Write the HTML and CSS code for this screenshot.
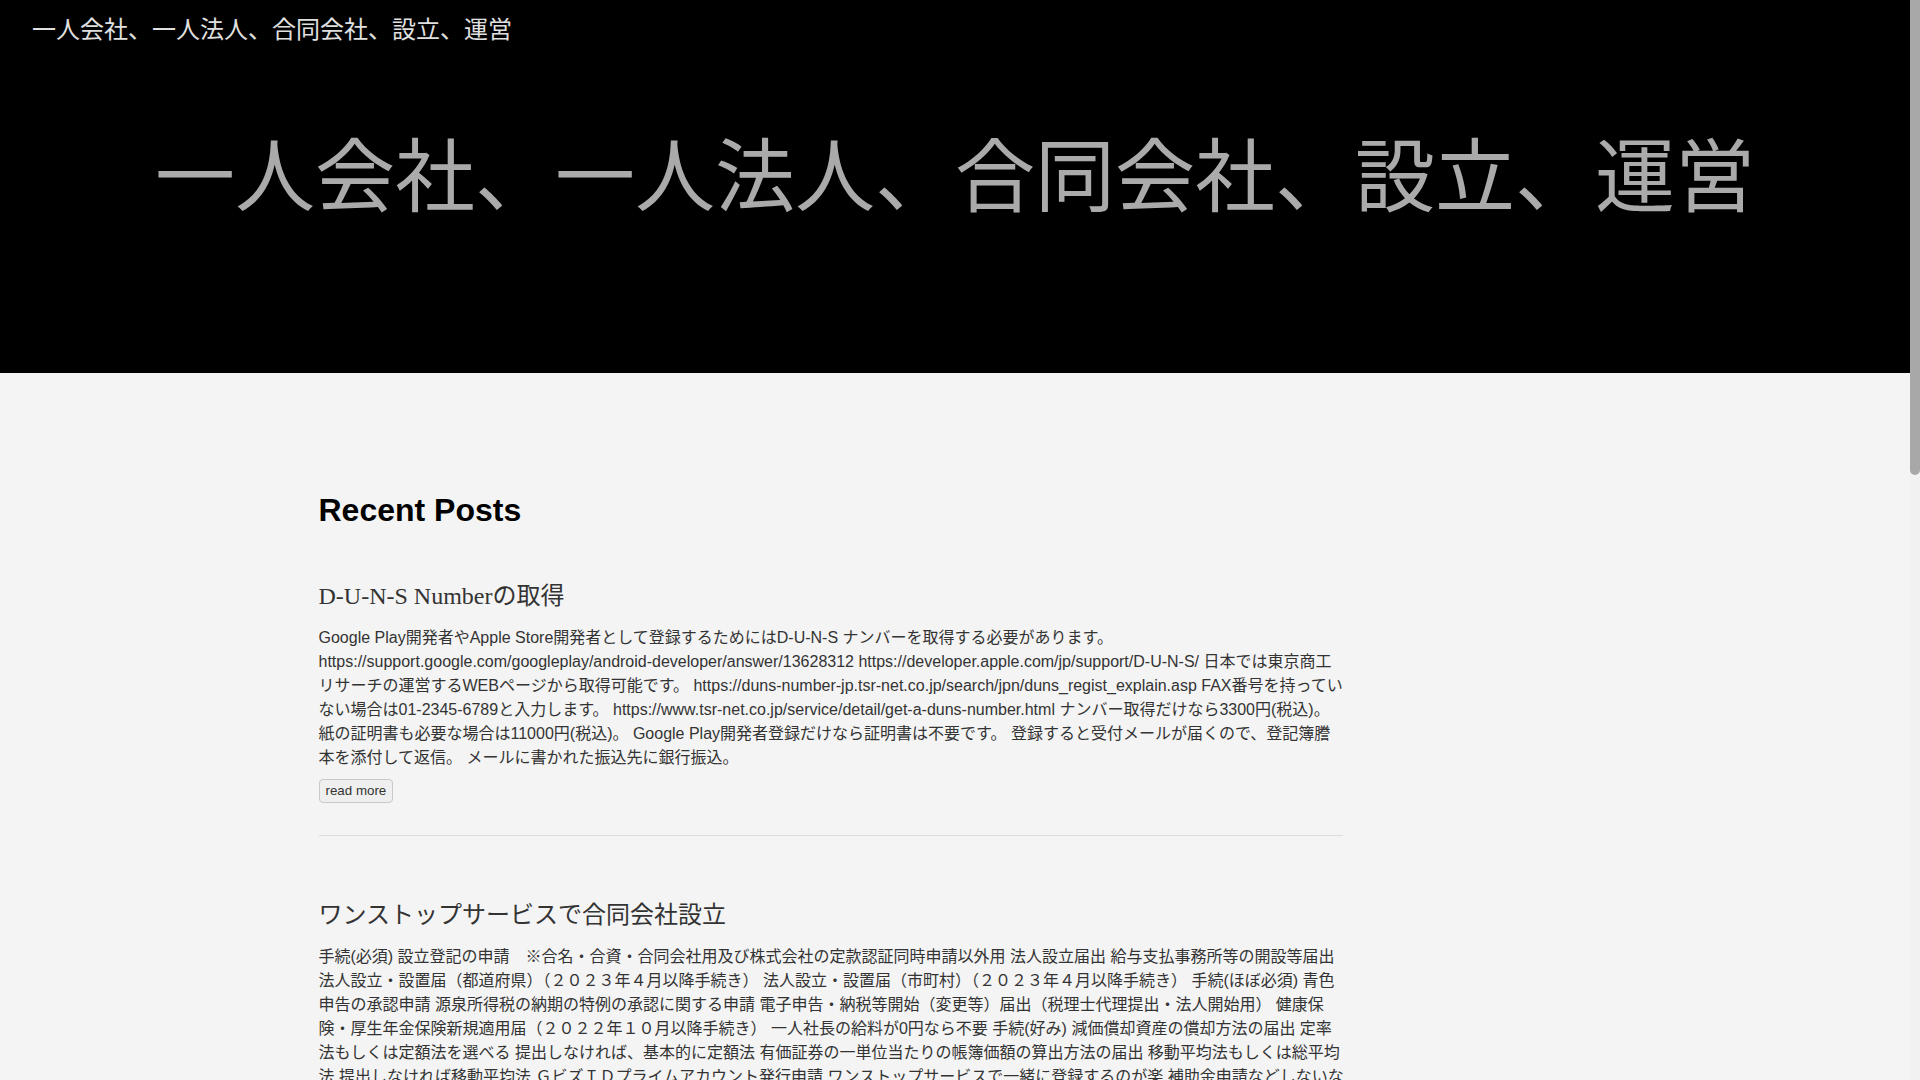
FILE: index.html
```html
<!DOCTYPE html>
<html lang="ja">
<head>
<meta charset="utf-8">
<title>一人会社、一人法人、合同会社、設立、運営</title>
<link rel="stylesheet" href="styles.css">
</head>
<body>
<div class="page">
  <header class="site-header">
    <div class="site-name">一人会社、一人法人、合同会社、設立、運営</div>
    <h1 class="hero-title">一人会社、一人法人、合同会社、設立、運営</h1>
  </header>

  <div class="wrapper">
    <main class="main">
      <h2 class="section-title">Recent Posts</h2>

      <article class="post">
        <h3 class="post-title">D-U-N-S Numberの取得</h3>
        <p class="post-body">Google Play開発者やApple Store開発者として登録するためにはD-U-N-S ナンバーを取得する必要があります。<br>https://support.google.com/googleplay/android-developer/answer/13628312 https://developer.apple.com/jp/support/D-U-N-S/ 日本では東京商工<br>リサーチの運営するWEBページから取得可能です。 https://duns-number-jp.tsr-net.co.jp/search/jpn/duns_regist_explain.asp FAX番号を持ってい<br>ない場合は01-2345-6789と入力します。 https://www.tsr-net.co.jp/service/detail/get-a-duns-number.html ナンバー取得だけなら3300円(税込)。<br>紙の証明書も必要な場合は11000円(税込)。 Google Play開発者登録だけなら証明書は不要です。 登録すると受付メールが届くので、登記簿謄<br>本を添付して返信。 メールに書かれた振込先に銀行振込。</p>
        <div class="post-actions"><button class="read-more" type="button">read more</button></div>
      </article>

      <article class="post">
        <h3 class="post-title">ワンストップサービスで合同会社設立</h3>
        <p class="post-body">手続(必須) 設立登記の申請　※合名・合資・合同会社用及び株式会社の定款認証同時申請以外用 法人設立届出 給与支払事務所等の開設等届出<br>法人設立・設置届（都道府県）（２０２３年４月以降手続き） 法人設立・設置届（市町村）（２０２３年４月以降手続き） 手続(ほぼ必須) 青色<br>申告の承認申請 源泉所得税の納期の特例の承認に関する申請 電子申告・納税等開始（変更等）届出（税理士代理提出・法人開始用） 健康保<br>険・厚生年金保険新規適用届（２０２２年１０月以降手続き） 一人社長の給料が0円なら不要 手続(好み) 減価償却資産の償却方法の届出 定率<br>法もしくは定額法を選べる 提出しなければ、基本的に定額法 有価証券の一単位当たりの帳簿価額の算出方法の届出 移動平均法もしくは総平均<br>法 提出しなければ移動平均法 ＧビズＩＤプライムアカウント発行申請 ワンストップサービスで一緒に登録するのが楽 補助金申請などしないな<br>ら不要 手続(必要に応じて) 棚卸資産の評価方法の届出 提出しなければ最終仕入原価法 事前確定届出給与に関する届出 役員賞与を損金にしたい場合に提出 申請はすべてマイナンバーカードとICカードリーダーまたはスマートフォンで行う 法人設立ワンストップサービスのページから登記申請と同時に各届出を作成できる 登記完了後に各機関へ自動的に送信される 控えはマイページからダウンロードできるので保存しておく</p>
        <div class="post-actions"><button class="read-more" type="button">read more</button></div>
      </article>

      <article class="post">
        <h3 class="post-title">合同会社の定款作成</h3>
        <p class="post-body">合同会社の定款は公証人の認証が不要です。 電子定款にすれば収入印紙4万円も不要になります。 絶対的記載事項として目的、商号、本店の所在地、社員の氏名又は名称及び住所、社員の全部を有限責任社員とする旨、社員の出資の目的及びその価額又は評価の標準を記載します。 一人会社の場合は業務執行社員と代表社員を同じ人にします。 事業年度は自由に決められますが、消費税の免税期間を考えて決めると良いです。 電子署名にはマイナンバーカードを使います。 PDFに署名するためのソフトは法務省のページからダウンロードできます。 作成した定款は登記申請の添付書類として提出します。</p>
        <div class="post-actions"><button class="read-more" type="button">read more</button></div>
      </article>

      <article class="post">
        <h3 class="post-title">法人口座の開設</h3>
        <p class="post-body">登記が完了したら法人口座を開設します。 ネット銀行は手数料が安く、一人会社でも審査に通りやすいです。 必要書類は履歴事項全部証明書、印鑑証明書、代表者の本人確認書類など。 事業内容が分かるWEBページや名刺があると審査がスムーズです。 口座開設後は会計ソフトと連携して記帳を自動化すると運営が楽になります。 役員報酬の支払いや社会保険料の引き落とし口座としても使います。</p>
        <div class="post-actions"><button class="read-more" type="button">read more</button></div>
      </article>
    </main>
    <aside class="sidebar"></aside>
  </div>

  <footer class="site-footer">
    <div class="footer-text">© 一人会社、一人法人、合同会社、設立、運営</div>
  </footer>
</div>

<div class="scrollbar" aria-hidden="true"><div class="scrollbar-thumb"></div></div>
</body>
</html>
```

FILE: styles.css
```css
html {
  background: #f4f4f4;
}

body {
  margin: 0;
  background: #f4f4f4;
  color: #333;
  font-family: "Liberation Sans", "Noto Sans CJK JP", sans-serif;
}

.page {
  margin-right: 10px;
}

.site-header {
  background: #000;
  height: 373px;
  box-sizing: border-box;
  padding-top: 12px;
}

.site-name {
  padding-left: 32px;
  font-size: 24px;
  line-height: 36px;
  color: #e0e0e0;
}

.hero-title {
  margin: 82px 0 0;
  text-align: center;
  font-size: 80px;
  line-height: 96px;
  font-weight: normal;
  color: #aaa;
  white-space: nowrap;
}

.wrapper {
  width: 1273px;
  margin: 0 auto;
  padding-top: 118px;
  display: grid;
  grid-template-columns: 1024px 249px;
}

.section-title {
  margin: 0 0 53px;
  font-size: 32px;
  line-height: 38.4px;
  font-weight: bold;
  color: #000;
}

.post {
  padding-bottom: 32px;
  border-bottom: 1px solid #dcdcdc;
  margin-bottom: 65px;
}

.post-title {
  margin: 0 0 15px;
  font-family: "Liberation Serif", "Noto Sans CJK JP", serif;
  font-size: 24px;
  line-height: 28.8px;
  font-weight: normal;
  color: #333;
}

.post-body {
  margin: 0 -12px 9px 0;
  font-size: 16px;
  line-height: 24px;
  color: #333;
}

.post-actions {
  display: flex;
}

.read-more {
  height: 24px;
  padding: 0 6px;
  border: 1px solid #c9c9c9;
  border-radius: 4px;
  background: #efefef;
  color: #333;
  font-family: "Liberation Sans", "Noto Sans CJK JP", sans-serif;
  font-size: 13.333px;
  line-height: 22px;
}

.site-footer {
  background: #000;
  color: #aaa;
  padding: 60px 32px;
  height: 160px;
}

.footer-text {
  font-size: 14px;
}

.scrollbar {
  position: fixed;
  top: 0;
  right: 0;
  width: 10px;
  height: 100vh;
  background: #f1f1f1;
}

.scrollbar-thumb {
  height: 475px;
  background: #a8a8a8;
  border-radius: 0 0 5px 5px;
}
```
